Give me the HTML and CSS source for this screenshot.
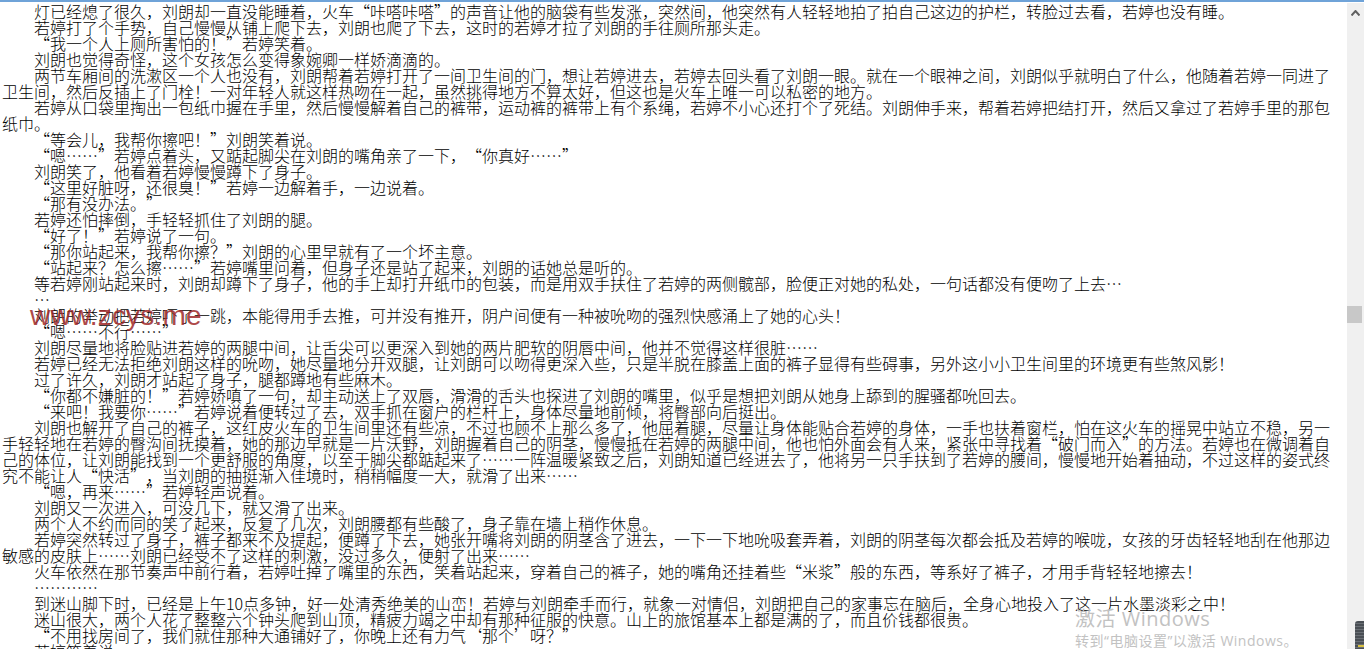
FILE: index.html
```html
<!DOCTYPE html>
<html lang="zh-CN">
<head>
<meta charset="utf-8">
<title>小说</title>
<link rel="stylesheet" href="styles.css">
</head>
<body>
<div class="topline"></div>
<div class="frame">
  <main class="content">
    <p>灯已经熄了很久，刘朗却一直没能睡着，火车“咔嗒咔嗒”的声音让他的脑袋有些发涨，突然间，他突然有人轻轻地拍了拍自己这边的护栏，转脸过去看，若婷也没有睡。</p>
    <p>若婷打了个手势，自己慢慢从铺上爬下去，刘朗也爬了下去，这时的若婷才拉了刘朗的手往厕所那头走。</p>
    <p>“我一个人上厕所害怕的！”若婷笑着。</p>
    <p>刘朗也觉得奇怪，这个女孩怎么变得象婉卿一样娇滴滴的。</p>
    <p>两节车厢间的洗漱区一个人也没有，刘朗帮着若婷打开了一间卫生间的门，想让若婷进去，若婷去回头看了刘朗一眼。就在一个眼神之间，刘朗似乎就明白了什么，他随着若婷一同进了<br>卫生间，然后反插上了门栓！一对年轻人就这样热吻在一起，虽然挑得地方不算太好，但这也是火车上唯一可以私密的地方。</p>
    <p>若婷从口袋里掏出一包纸巾握在手里，然后慢慢解着自己的裤带，运动裤的裤带上有个系绳，若婷不小心还打个了死结。刘朗伸手来，帮着若婷把结打开，然后又拿过了若婷手里的那包<br>纸巾。</p>
    <p>“等会儿，我帮你擦吧！”刘朗笑着说。</p>
    <p>“嗯……”若婷点着头，又踮起脚尖在刘朗的嘴角亲了一下，“你真好……”</p>
    <p>刘朗笑了，他看着若婷慢慢蹲下了身子。</p>
    <p>“这里好脏呀，还很臭！”若婷一边解着手，一边说着。</p>
    <p>“那有没办法。”</p>
    <p>若婷还怕摔倒，手轻轻抓住了刘朗的腿。</p>
    <p>“好了！”若婷说了一句。</p>
    <p>“那你站起来，我帮你擦？”刘朗的心里早就有了一个坏主意。</p>
    <p>“站起来？怎么擦……”若婷嘴里问着，但身子还是站了起来，刘朗的话她总是听的。</p>
    <p>等若婷刚站起来时，刘朗却蹲下了身子，他的手上却打开纸巾的包装，而是用双手扶住了若婷的两侧髋部，脸便正对她的私处，一句话都没有便吻了上去…</p>
    <p>…</p>
    <p>刘朗的举动把若婷吓了一跳，本能得用手去推，可并没有推开，阴户间便有一种被吮吻的强烈快感涌上了她的心头！</p>
    <p>“嗯……不行……”</p>
    <p>刘朗尽量地将脸贴进若婷的两腿中间，让舌尖可以更深入到她的两片肥软的阴唇中间，他并不觉得这样很脏……</p>
    <p>若婷已经无法拒绝刘朗这样的吮吻，她尽量地分开双腿，让刘朗可以吻得更深入些，只是半脱在膝盖上面的裤子显得有些碍事，另外这小小卫生间里的环境更有些煞风影！</p>
    <p>过了许久，刘朗才站起了身子，腿都蹲地有些麻木。</p>
    <p>“你都不嫌脏的！”若婷娇嗔了一句，却主动送上了双唇，滑滑的舌头也探进了刘朗的嘴里，似乎是想把刘朗从她身上舔到的腥骚都吮回去。</p>
    <p>“来吧！我要你……”若婷说着便转过了去，双手抓在窗户的栏杆上，身体尽量地前倾，将臀部向后挺出。</p>
    <p>刘朗也解开了自己的裤子，这红皮火车的卫生间里还有些凉，不过也顾不上那么多了，他屈着腿，尽量让身体能贴合若婷的身体，一手也扶着窗栏，怕在这火车的摇晃中站立不稳，另一<br>手轻轻地在若婷的臀沟间抚摸着，她的那边早就是一片沃野，刘朗握着自己的阴茎，慢慢抵在若婷的两腿中间，他也怕外面会有人来，紧张中寻找着“破门而入”的方法。若婷也在微调着自<br>己的体位，让刘朗能找到一个更舒服的角度，以至于脚尖都踮起来了……一阵温暖紧致之后，刘朗知道已经进去了，他将另一只手扶到了若婷的腰间，慢慢地开始着抽动，不过这样的姿式终<br>究不能让人“快活”，当刘朗的抽挺渐入佳境时，稍稍幅度一大，就滑了出来……</p>
    <p>“嗯，再来……”若婷轻声说着。</p>
    <p>刘朗又一次进入，可没几下，就又滑了出来。</p>
    <p>两个人不约而同的笑了起来，反复了几次，刘朗腰都有些酸了，身子靠在墙上稍作休息。</p>
    <p>若婷突然转过了身子，裤子都来不及提起，便蹲了下去，她张开嘴将刘朗的阴茎含了进去，一下一下地吮吸套弄着，刘朗的阴茎每次都会抵及若婷的喉咙，女孩的牙齿轻轻地刮在他那边<br>敏感的皮肤上……刘朗已经受不了这样的刺激，没过多久，便射了出来……</p>
    <p>火车依然在那节奏声中前行着，若婷吐掉了嘴里的东西，笑着站起来，穿着自己的裤子，她的嘴角还挂着些“米浆”般的东西，等系好了裤子，才用手背轻轻地擦去！</p>
    <p>…………</p>
    <p>到迷山脚下时，已经是上午10点多钟，好一处清秀绝美的山峦！若婷与刘朗牵手而行，就象一对情侣，刘朗把自己的家事忘在脑后，全身心地投入了这一片水墨淡彩之中！</p>
    <p>迷山很大，两个人花了整整六个钟头爬到山顶，精疲力竭之中却有那种征服的快意。山上的旅馆基本上都是满的了，而且价钱都很贵。</p>
    <p>“不用找房间了，我们就住那种大通铺好了，你晚上还有力气‘那个’呀？”</p>
    <p>若婷笑着说。</p>
  </main>
  <aside class="scrollbar">
    <svg class="arrow" width="9" height="6" viewBox="0 0 9 6"><path d="M0.5 5.5 L4.5 1 L8.5 5.5" fill="none" stroke="#606060" stroke-width="2"/></svg>
    <div class="thumb"></div>
  </aside>
</div>
<div class="site-mark">www.zcys.me</div>
<div class="activation">
  <div class="activation-title">激活 Windows</div>
  <div class="activation-sub">转到“电脑设置”以激活 Windows。</div>
</div>
<div class="tray-widget"></div>
</body>
</html>
```
FILE: styles.css
```css
html, body {
  margin: 0;
  padding: 0;
  height: 649px;
  overflow: hidden;
  background: #fff;
}
body {
  position: relative;
  font-family: "Noto Sans CJK SC", sans-serif;
  color: #000;
}
.topline {
  height: 2px;
  background: #6fa3d8;
}
.frame {
  display: flex;
  height: 646px;
  margin-top: 1px;
}
.content {
  flex: 1;
  min-width: 0;
  overflow: hidden;
  padding-left: 2px;
  font-size: 16px;
  line-height: 16px;
  font-weight: 300;
  white-space: nowrap;
  text-spacing-trim: space-all;
}
.content p {
  margin: 0;
  text-indent: 32px;
}
.scrollbar {
  width: 17px;
  flex: none;
  background: #f0f0f0;
  display: flex;
  flex-direction: column;
  align-items: flex-start;
}
.arrow {
  margin: 7px 0 0 4px;
}
.thumb {
  width: 15px;
  height: 17px;
  margin-top: 290px;
  background: #c8c8c8;
}
.site-mark {
  position: absolute;
  left: 30px;
  top: 300px;
  font-family: "Liberation Sans", sans-serif;
  font-size: 28px;
  line-height: 32px;
  letter-spacing: 0.2px;
  color: #a02a2a;
  opacity: 0.85;
}
.activation {
  position: absolute;
  left: 1075px;
  top: 607px;
  color: #c2c2c2;
  font-family: "Open Sans", "Noto Sans CJK SC", sans-serif;
}
.activation-title {
  font-size: 20px;
  line-height: 24px;
  letter-spacing: 0.5px;
}
.activation-sub {
  font-size: 14px;
  line-height: 20px;
  letter-spacing: 0.5px;
}
.tray-widget {
  position: absolute;
  left: 1355px;
  top: 621px;
  width: 9px;
  height: 28px;
  background:
    linear-gradient(#d8c040, #d8c040) 3px 24px / 6px 2px no-repeat,
    repeating-linear-gradient(#4a4f55 0 2px, #6a6f75 2px 3px);
  border-radius: 3px 0 0 0;
}
```
